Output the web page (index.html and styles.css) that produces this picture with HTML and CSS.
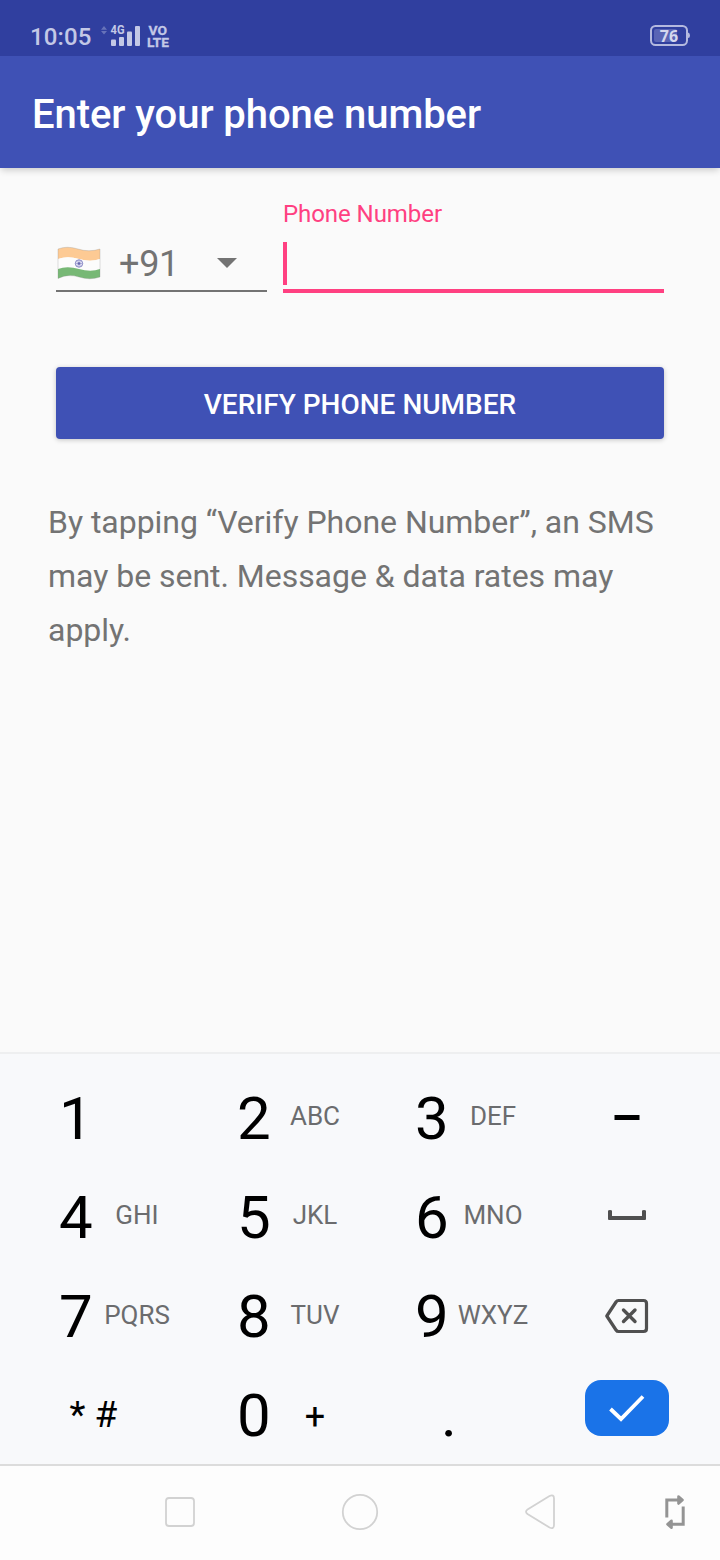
FILE: index.html
```html
<!DOCTYPE html>
<html lang="en">
<head>
<meta charset="utf-8">
<title>Enter your phone number</title>
<link rel="stylesheet" href="styles.css">
</head>
<body>
<div class="screen">
  <div class="status">
    <span class="time">10:05</span>
    <svg class="signal" width="72" height="28" viewBox="100 22 72 28">
      <g fill="#c3c8e6">
        <path d="M101 29.700L104 26L107 29.700ZM101 31L104 34.500L107 31Z" opacity=".38"/>
        <rect x="111" y="39.500" width="5" height="6.500" rx="1"/>
        <rect x="119" y="37" width="5" height="9" rx="1"/>
        <rect x="127" y="31.500" width="5" height="14.500" rx="1"/>
        <rect x="135" y="26" width="5" height="20" rx="1"/>
        <text class="net" x="110.500" y="34.200" textLength="14" lengthAdjust="spacingAndGlyphs">4G</text>
        <text class="volte" x="148.500" y="35" textLength="18.500" lengthAdjust="spacingAndGlyphs">VO</text>
        <text class="volte" x="147" y="47" textLength="22" lengthAdjust="spacingAndGlyphs">LTE</text>
      </g>
    </svg>
    <svg class="battery" width="42" height="24" viewBox="649 24 42 24">
      <rect x="651" y="26" width="36" height="19" rx="4.500" fill="none" stroke="#b4b9df" stroke-width="2"/>
      <rect x="654" y="29" width="23" height="13" rx="2" fill="#5964b5"/>
      <path d="M688 32.500Q690 33 690 35.500T688 38Z" fill="#b4b9df"/>
      <text class="level" x="669" y="41.500" text-anchor="middle">76</text>
    </svg>
  </div>
  <header class="appbar">Enter your phone number</header>
  <main class="content">
    <div class="form">
      <div class="country">
        <svg class="flag" width="44" height="34" viewBox="0 0 44 34">
          <path d="M1 3Q10-.500 21 3T43 3V13Q33 16.500 22 13T1 13Z" fill="#fdca94"/>
          <path d="M1 13Q10 9.500 22 13T43 13V23Q33 26.500 22 23T1 23Z" fill="#fcfcfc"/>
          <path d="M1 23Q10 19.500 22 23T43 23V31Q33 34.500 22 31T1 32.500Z" fill="#77b875"/>
          <path d="M1 3Q10-.500 21 3T43 3V31Q33 34.500 22 31T1 32.500Z" fill="none" stroke="#888" stroke-opacity=".28"/>
          <circle cx="22" cy="17.500" r="3.700" fill="#eeeef9" stroke="#8888c5"/>
          <path d="M22 14V21M18.500 17.500H25.500M19.500 15L24.500 20M24.500 15L19.500 20" stroke="#8585c5" stroke-width=".6"/>
          <circle cx="22" cy="17.500" r="1.300" fill="#6666ae"/>
        </svg>
        <span class="code">+91</span>
        <svg class="caret" width="20" height="10" viewBox="0 0 20 10"><path d="M0 0H20L10 10Z" fill="#737373"/></svg>
      </div>
      <div class="field">
        <label class="hint">Phone Number</label>
        <div class="input"><span class="cursor"></span></div>
      </div>
    </div>
    <button class="verify">VERIFY PHONE NUMBER</button>
    <p class="terms">By tapping “Verify Phone Number”, an SMS may be sent. Message &amp; data rates may apply.</p>
  </main>
  <div class="keyboard">
    <div class="key"><b>1</b></div>
    <div class="key"><b>2</b><i>ABC</i></div>
    <div class="key"><b>3</b><i>DEF</i></div>
    <div class="key icon"><svg width="26" height="5" viewBox="0 0 26 5"><path d="M.500 0H25.500V5H.500Z"/></svg></div>
    <div class="key"><b>4</b><i>GHI</i></div>
    <div class="key"><b>5</b><i>JKL</i></div>
    <div class="key"><b>6</b><i>MNO</i></div>
    <div class="key icon space"><svg width="38" height="10" viewBox="0 0 38 10"><path d="M0 1Q0 0 2 0T4 1V6H34V1Q34 0 36 0T38 1V9Q38 10 37 10H1Q0 10 0 9Z" fill="#505050"/></svg></div>
    <div class="key third"><b>7</b><i>PQRS</i></div>
    <div class="key third"><b>8</b><i>TUV</i></div>
    <div class="key third"><b>9</b><i>WXYZ</i></div>
    <div class="key icon"><svg width="44" height="36" viewBox="605 1298 44 36"><g fill="none" stroke="#505050" stroke-width="3.200" stroke-linejoin="round"><path d="M618.500 1300.500H643.500Q646.500 1300.500 646.500 1303.500V1328.500Q646.500 1331.500 643.500 1331.500H618.500Q617 1331.500 616 1330L606.800 1316L616 1302Q617 1300.500 618.500 1300.500Z"/><path d="M623.500 1310L635 1321.500M635 1310L623.500 1321.500" stroke-width="3.400" stroke-linecap="round"/></g></svg></div>
    <div class="key last symbols"><span>*</span><span>#</span></div>
    <div class="key last"><b>0</b><i class="plus">+</i></div>
    <div class="key last dot"><b>.</b></div>
    <div class="key icon enter"><span class="done"><svg width="36" height="28" viewBox="0 0 36 28"><path d="M1.500 15L12 25L34 2.500" fill="none" stroke="#fff" stroke-width="3.800"/></svg></span></div>
  </div>
  <nav class="nav">
    <svg width="720" height="94" viewBox="0 1466 720 94">
      <g fill="none" stroke="#d2d2d2" stroke-width="1.800">
        <rect x="166" y="1498" width="28" height="28" rx="3"/>
        <circle cx="360" cy="1512" r="17.200"/>
        <path d="M527.500 1509.500L549.500 1496Q554 1494 554 1498.500V1525Q554 1529.500 549.500 1527.500L527.500 1514Q524.500 1511.700 527.500 1509.500Z"/>
      </g>
      <path d="M666.800 1517.500V1500H681M683.200 1506.500V1524.200H669" fill="none" stroke="#949494" stroke-width="3"/>
      <path d="M678.500 1496.500L682.500 1500L678.500 1503.500ZM671.500 1520.700L667.500 1524.200L671.500 1527.700Z" fill="#949494" stroke="#949494" stroke-width="2.600" stroke-linejoin="round"/>
    </svg>
  </nav>
</div>
</body>
</html>
```
FILE: styles.css
```css
* { box-sizing: border-box; }
body { margin: 0; font-family: Roboto, sans-serif; background: #fafafa; }
svg { display: block; flex: none; }
.screen { width: 720px; height: 1560px; display: flex; flex-direction: column; overflow: hidden; }
.status { height: 56px; flex: none; background: #303f9f; display: flex; padding: 22px 29px 0 30px; color: #c3c8e6; }
.time { width: 70px; font-size: 24px; line-height: 30px; font-weight: 500; white-space: nowrap; letter-spacing: .15px; }
.signal { flex: none; }
.battery { margin: 2px 0 0 auto; }
.net { font-size: 12px; font-weight: 700; }
.volte { font-size: 13.500px; font-weight: 700; stroke: #c3c8e6; stroke-width: .3px; }
.level { font: 700 16px "Noto Sans", sans-serif; fill: #d4d7ee; }
.appbar { height: 112px; flex: none; background: #3f51b5; color: #fff; font-size: 40px; font-weight: 500; line-height: 118px; padding-left: 32px; letter-spacing: -.06px; box-shadow: 0 3px 7px -1px rgba(0,0,0,.2); clip-path: inset(0 0 -12px 0); }
.content { flex: 1; padding: 32px 48px 0; }
.form { display: flex; align-items: flex-end; gap: 16px; margin: 0 8px; height: 93px; }
.country { width: 211px; height: 57px; margin-bottom: 1px; border-bottom: 2px solid #737373; display: flex; align-items: center; color: #737373; }
.flag { margin: 1px 0 0 .5px; }
.code { font-size: 36px; line-height: 56px; margin: 2px 0 0 18.5px; width: 61px; letter-spacing: -.3px; }
.caret { margin-left: 37px; }
.field { width: 381px; height: 93px; border-bottom: 4px solid #ff4081; color: #ff4081; }
.hint { display: block; font-size: 24px; line-height: 28px; letter-spacing: -.06px; }
.input { padding-top: 14px; }
.cursor { display: block; width: 4px; height: 43px; background: #ff4081; }
.verify { display: block; width: 608px; height: 72px; margin: 74px 8px 0; padding: 3px 0 0; border: 0; border-radius: 4px; background: #3f51b5; color: #fff; font: 500 28px Roboto, sans-serif; box-shadow: 0 1px 5px rgba(0,0,0,.22); }
.terms { margin: 56px 0 0; color: #737373; font-size: 32px; line-height: 54px; letter-spacing: -.03px; }
.keyboard { height: 412px; flex: none; border-top: 2px solid #eeeff0; background: #f8f9fb; padding: 15px 4px 0; display: grid; grid-template-columns: repeat(4, 178px); grid-template-rows: 99px 99px 99px 98px; color: #000; }
.key { display: flex; align-items: center; padding-left: 55px; }
.key b { width: 34px; font-size: 60px; line-height: 70px; font-weight: 400; }
.key i { width: 88px; text-align: center; font-style: normal; font-size: 26px; line-height: 30px; color: #6b6c6e; margin-top: -5px; }
.third i { margin-top: -3px; }
.key.icon { padding: 0 0 2px; justify-content: center; }
.key.space { padding-bottom: 6px; }
.last { padding-top: 2px; }
.key .plus { color: #000; font-size: 36px; margin-top: 1px; }
.symbols { padding: 0 0 1px 65.5px; font-size: 37px; gap: 9px; }
.dot { padding-left: 81px; }
.key.enter { align-items: flex-start; padding: 0; }
.done { width: 84px; height: 56px; margin-top: 14px; border-radius: 16px; background: #1a73e8; display: flex; align-items: center; justify-content: center; }
.nav { height: 96px; flex: none; border-top: 2px solid #dcdcdc; background: #fdfdfd; }
```
